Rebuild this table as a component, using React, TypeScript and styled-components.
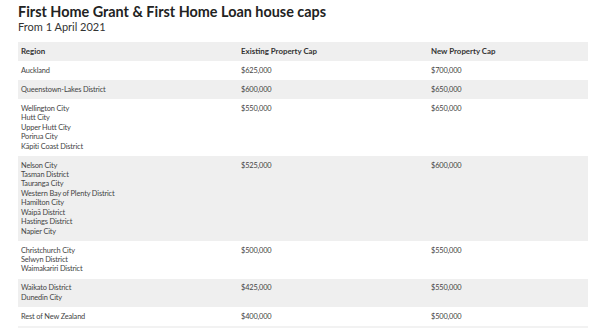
import React from "react";
import styled, { createGlobalStyle } from "styled-components";

const Global = createGlobalStyle`
  html, body { margin: 0; padding: 0; background: #fff; }
  body { font-family: Lato, "Liberation Sans", sans-serif; color: #333; }
`;

const Page = styled.div`
  padding: 4px 12px 0 18px;
  width: 600px;
  box-sizing: border-box;
`;

const Title = styled.h1`
  margin: 0;
  font-size: 14.4px;
  line-height: 16px;
  font-weight: 700;
  color: #222;
`;

const Subtitle = styled.div`
  font-size: 11px;
  line-height: 13px;
  color: #333;
  margin-bottom: 9px;
`;

const Table = styled.div`
  display: grid;
  grid-template-columns: 220px 190px 1fr;
  width: 570px;
  font-size: 7.4px;
  line-height: 9.43px;
  border-bottom: 2px solid #f2f2f2;
`;

const Row = styled.div<{ $shade: boolean }>`
  display: contents;
  & > div {
    background: ${(p) => (p.$shade ? "#efefef" : "#fff")};
  }
`;

const Cell = styled.div<{ $head?: boolean }>`
  padding: 4.8px 3px;
  font-size: ${(p) => (p.$head ? "7.9px" : "7.4px")};
  font-weight: ${(p) => (p.$head ? 700 : 400)};
  color: ${(p) => (p.$head ? "#333" : "#444")};
  letter-spacing: ${(p) => (p.$head ? "0" : "-0.15px")};
`;

const Line = styled.div`
  height: 9.43px;
  white-space: nowrap;
`;

const rows: { regions: string[]; existing: string; next: string }[] = [
  { regions: ["Auckland"], existing: "$625,000", next: "$700,000" },
  { regions: ["Queenstown-Lakes District"], existing: "$600,000", next: "$650,000" },
  {
    regions: ["Wellington City", "Hutt City", "Upper Hutt City", "Porirua City", "Kāpiti Coast District"],
    existing: "$550,000",
    next: "$650,000",
  },
  {
    regions: [
      "Nelson City",
      "Tasman District",
      "Tauranga City",
      "Western Bay of Plenty District",
      "Hamilton City",
      "Waipā District",
      "Hastings District",
      "Napier City",
    ],
    existing: "$525,000",
    next: "$600,000",
  },
  { regions: ["Christchurch City", "Selwyn District", "Waimakariri District"], existing: "$500,000", next: "$550,000" },
  { regions: ["Waikato District", "Dunedin City"], existing: "$425,000", next: "$550,000" },
  { regions: ["Rest of New Zealand"], existing: "$400,000", next: "$500,000" },
];

export default function App() {
  return (
    <Page>
      <Global />
      <Title>First Home Grant &amp; First Home Loan house caps</Title>
      <Subtitle>From 1 April 2021</Subtitle>
      <Table>
        <Row $shade={true}>
          <Cell $head>
            <Line>Region</Line>
          </Cell>
          <Cell $head>
            <Line>Existing Property Cap</Line>
          </Cell>
          <Cell $head>
            <Line>New Property Cap</Line>
          </Cell>
        </Row>
        {rows.map((r, i) => (
          <Row key={i} $shade={i % 2 === 1}>
            <Cell>
              {r.regions.map((name) => (
                <Line key={name}>{name}</Line>
              ))}
            </Cell>
            <Cell>
              <Line>{r.existing}</Line>
            </Cell>
            <Cell>
              <Line>{r.next}</Line>
            </Cell>
          </Row>
        ))}
      </Table>
    </Page>
  );
}
